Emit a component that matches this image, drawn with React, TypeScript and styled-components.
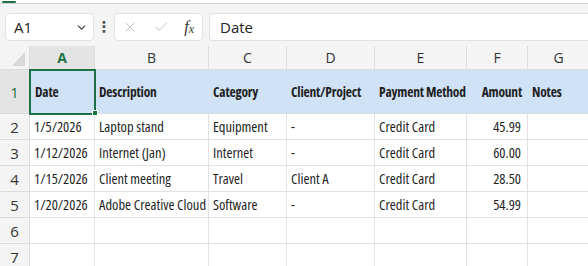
import React from "react";
import styled, { createGlobalStyle } from "styled-components";
import { ChevronDown, X, Check } from "lucide-react";

const GlobalStyle = createGlobalStyle`
  html, body {
    margin: 0;
    padding: 0;
    background: #ffffff;
  }
  body {
    font-family: "Open Sans", Lato, sans-serif;
    font-stretch: 75%;
    color: #1f1f1f;
    overflow: hidden;
  }
`;

const columns = [
  { key: "A", width: 65 },
  { key: "B", width: 114 },
  { key: "C", width: 78 },
  { key: "D", width: 88 },
  { key: "E", width: 92 },
  { key: "F", width: 61 },
  { key: "G", width: 62 },
];

type Row = string[];

const headers: Row = ["Date", "Description", "Category", "Client/Project", "Payment Method", "Amount", "Notes"];

const rows: Row[] = [
  ["1/5/2026", "Laptop stand", "Equipment", "-", "Credit Card", "45.99", ""],
  ["1/12/2026", "Internet (Jan)", "Internet", "-", "Credit Card", "60.00", ""],
  ["1/15/2026", "Client meeting", "Travel", "Client A", "Credit Card", "28.50", ""],
  ["1/20/2026", "Adobe Creative Cloud", "Software", "-", "Credit Card", "54.99", ""],
  ["", "", "", "", "", "", ""],
  ["", "", "", "", "", "", ""],
];

// the Amount column is right aligned
const NUMERIC_COL = 5;

const gridTemplate = `30px ${columns.map((c) => c.width + "px").join(" ")}`;

const App = () => {
  return (
    <Page>
      <GlobalStyle />
      <TopStrip>
        <TabMark />
      </TopStrip>
      <Toolbar>
        <NameBox>
          <span>A1</span>
          <ChevronDown size={13} strokeWidth={2.4} color="#444" />
        </NameBox>
        <Dots>⋮</Dots>
        <FormulaButtons>
          <X size={16} strokeWidth={1.3} color="#b5b5b5" />
          <Check size={16} strokeWidth={1.3} color="#b5b5b5" />
          <Fx>
            f<sub>x</sub>
          </Fx>
        </FormulaButtons>
        <FormulaInput>Date</FormulaInput>
      </Toolbar>

      <Sheet style={{ gridTemplateColumns: gridTemplate }}>
        <Corner>
          <CornerTriangle />
        </Corner>
        {columns.map((c) => (
          <ColHeader key={c.key} $active={c.key === "A"}>
            {c.key}
          </ColHeader>
        ))}

        <RowHeader $active>1</RowHeader>
        {headers.map((h, i) => (
          <HeadCell key={h} $selected={i === 0} $numeric={i === NUMERIC_COL}>
            {h}
            {i === 0 && <FillHandle />}
          </HeadCell>
        ))}

        {rows.map((r, ri) => (
          <React.Fragment key={ri}>
            <RowHeader>{ri + 2}</RowHeader>
            {r.map((v, ci) => (
              <Cell key={ci} $numeric={ci === NUMERIC_COL}>
                {v}
              </Cell>
            ))}
          </React.Fragment>
        ))}
      </Sheet>
    </Page>
  );
};

const Page = styled.div`
  width: 588px;
  height: 266px;
  overflow: hidden;
  background: #ffffff;
`;

const TopStrip = styled.div`
  height: 3px;
  background: #ffffff;
  border-bottom: 1px solid #d4d4d4;
  position: relative;
`;

const TabMark = styled.div`
  position: absolute;
  left: 2px;
  top: 1px;
  width: 14px;
  height: 2px;
  background: #1e7145;
  border-radius: 1px;
`;

const Toolbar = styled.div`
  display: flex;
  align-items: center;
  height: 42px;
  padding: 4px 0 0 5px;
  background: #f4f4f4;
  box-sizing: border-box;
  font-stretch: 90%;
`;

const Box = styled.div`
  height: 28px;
  background: #ffffff;
  border: 1px solid #e2e2e2;
  border-radius: 4px;
  box-sizing: border-box;
  display: flex;
  align-items: center;
`;

const NameBox = styled(Box)`
  width: 89px;
  padding: 0 5px 0 8px;
  justify-content: space-between;
  font-size: 15px;
  color: #222;
`;

const Dots = styled.div`
  width: 20px;
  text-align: center;
  font-size: 15px;
  font-weight: bold;
  color: #555;
  font-family: "DejaVu Sans", sans-serif;
`;

const FormulaButtons = styled(Box)`
  width: 89px;
  padding: 0 6px 0 7px;
  justify-content: space-between;
`;

const Fx = styled.span`
  font-family: "Liberation Serif", serif;
  font-style: italic;
  font-size: 16px;
  color: #333;
  line-height: 1;
  padding-right: 2px;

  sub {
    font-size: 12px;
    vertical-align: -1px;
  }
`;

const FormulaInput = styled(Box)`
  flex: 1;
  margin-left: 6px;
  padding-left: 10px;
  border-right: none;
  border-radius: 4px 0 0 4px;
  font-size: 15px;
  color: #222;
`;

const Sheet = styled.div`
  display: grid;
  grid-template-rows: 24px 44px repeat(6, 26px);
  width: max-content;
  background: #ffffff;
`;

const Corner = styled.div`
  background: #f4f4f4;
  position: relative;
  border-right: 1px solid #dcdcdc;
  border-bottom: 1px solid #dcdcdc;
`;

const CornerTriangle = styled.div`
  position: absolute;
  right: 4px;
  bottom: 3px;
  width: 0;
  height: 0;
  border-left: 13px solid transparent;
  border-bottom: 14px solid #d8d8d8;
`;

const ColHeader = styled.div<{ $active?: boolean }>`
  background: ${(p) => (p.$active ? "#e4e4e4" : "#f4f4f4")};
  color: ${(p) => (p.$active ? "#1e7145" : "#333")};
  font-weight: ${(p) => (p.$active ? 700 : 400)};
  font-size: 14px;
  font-stretch: 90%;
  display: flex;
  align-items: center;
  justify-content: center;
  border-right: 1px solid #dcdcdc;
  border-bottom: 1px solid #dcdcdc;
  box-sizing: border-box;
`;

const RowHeader = styled.div<{ $active?: boolean }>`
  background: ${(p) => (p.$active ? "#e4e4e4" : "#f4f4f4")};
  color: ${(p) => (p.$active ? "#1e7145" : "#333")};
  font-size: 15px;
  font-stretch: 90%;
  display: flex;
  align-items: center;
  justify-content: center;
  border-right: 1px solid #dcdcdc;
  border-bottom: 1px solid #dcdcdc;
  box-sizing: border-box;
`;

const HeadCell = styled.div<{ $selected?: boolean; $numeric?: boolean }>`
  position: relative;
  background: #cfe2f6;
  font-weight: 700;
  font-size: 13.5px;
  letter-spacing: -0.2px;
  display: flex;
  align-items: center;
  justify-content: ${(p) => (p.$numeric ? "flex-end" : "flex-start")};
  padding: 0 6px 0 4px;
  white-space: nowrap;
  box-sizing: border-box;
  border-bottom: 1px solid #dcdcdc;
  ${(p) =>
    p.$selected &&
    `
    outline: 2px solid #1e7145;
    outline-offset: -1px;
    z-index: 1;
    padding-left: 5px;
  `}
`;

const FillHandle = styled.div`
  position: absolute;
  right: -3px;
  bottom: -3px;
  width: 6px;
  height: 6px;
  background: #1e7145;
  border: 1px solid #ffffff;
  box-sizing: border-box;
`;

const Cell = styled.div<{ $numeric?: boolean }>`
  font-size: 14.5px;
  display: flex;
  align-items: center;
  justify-content: ${(p) => (p.$numeric ? "flex-end" : "flex-start")};
  padding: 0 6px 0 4px;
  white-space: nowrap;
  overflow: hidden;
  box-sizing: border-box;
  border-right: 1px solid #e2e2e2;
  border-bottom: 1px solid #e2e2e2;
  color: #1f1f1f;
`;

export default App;
